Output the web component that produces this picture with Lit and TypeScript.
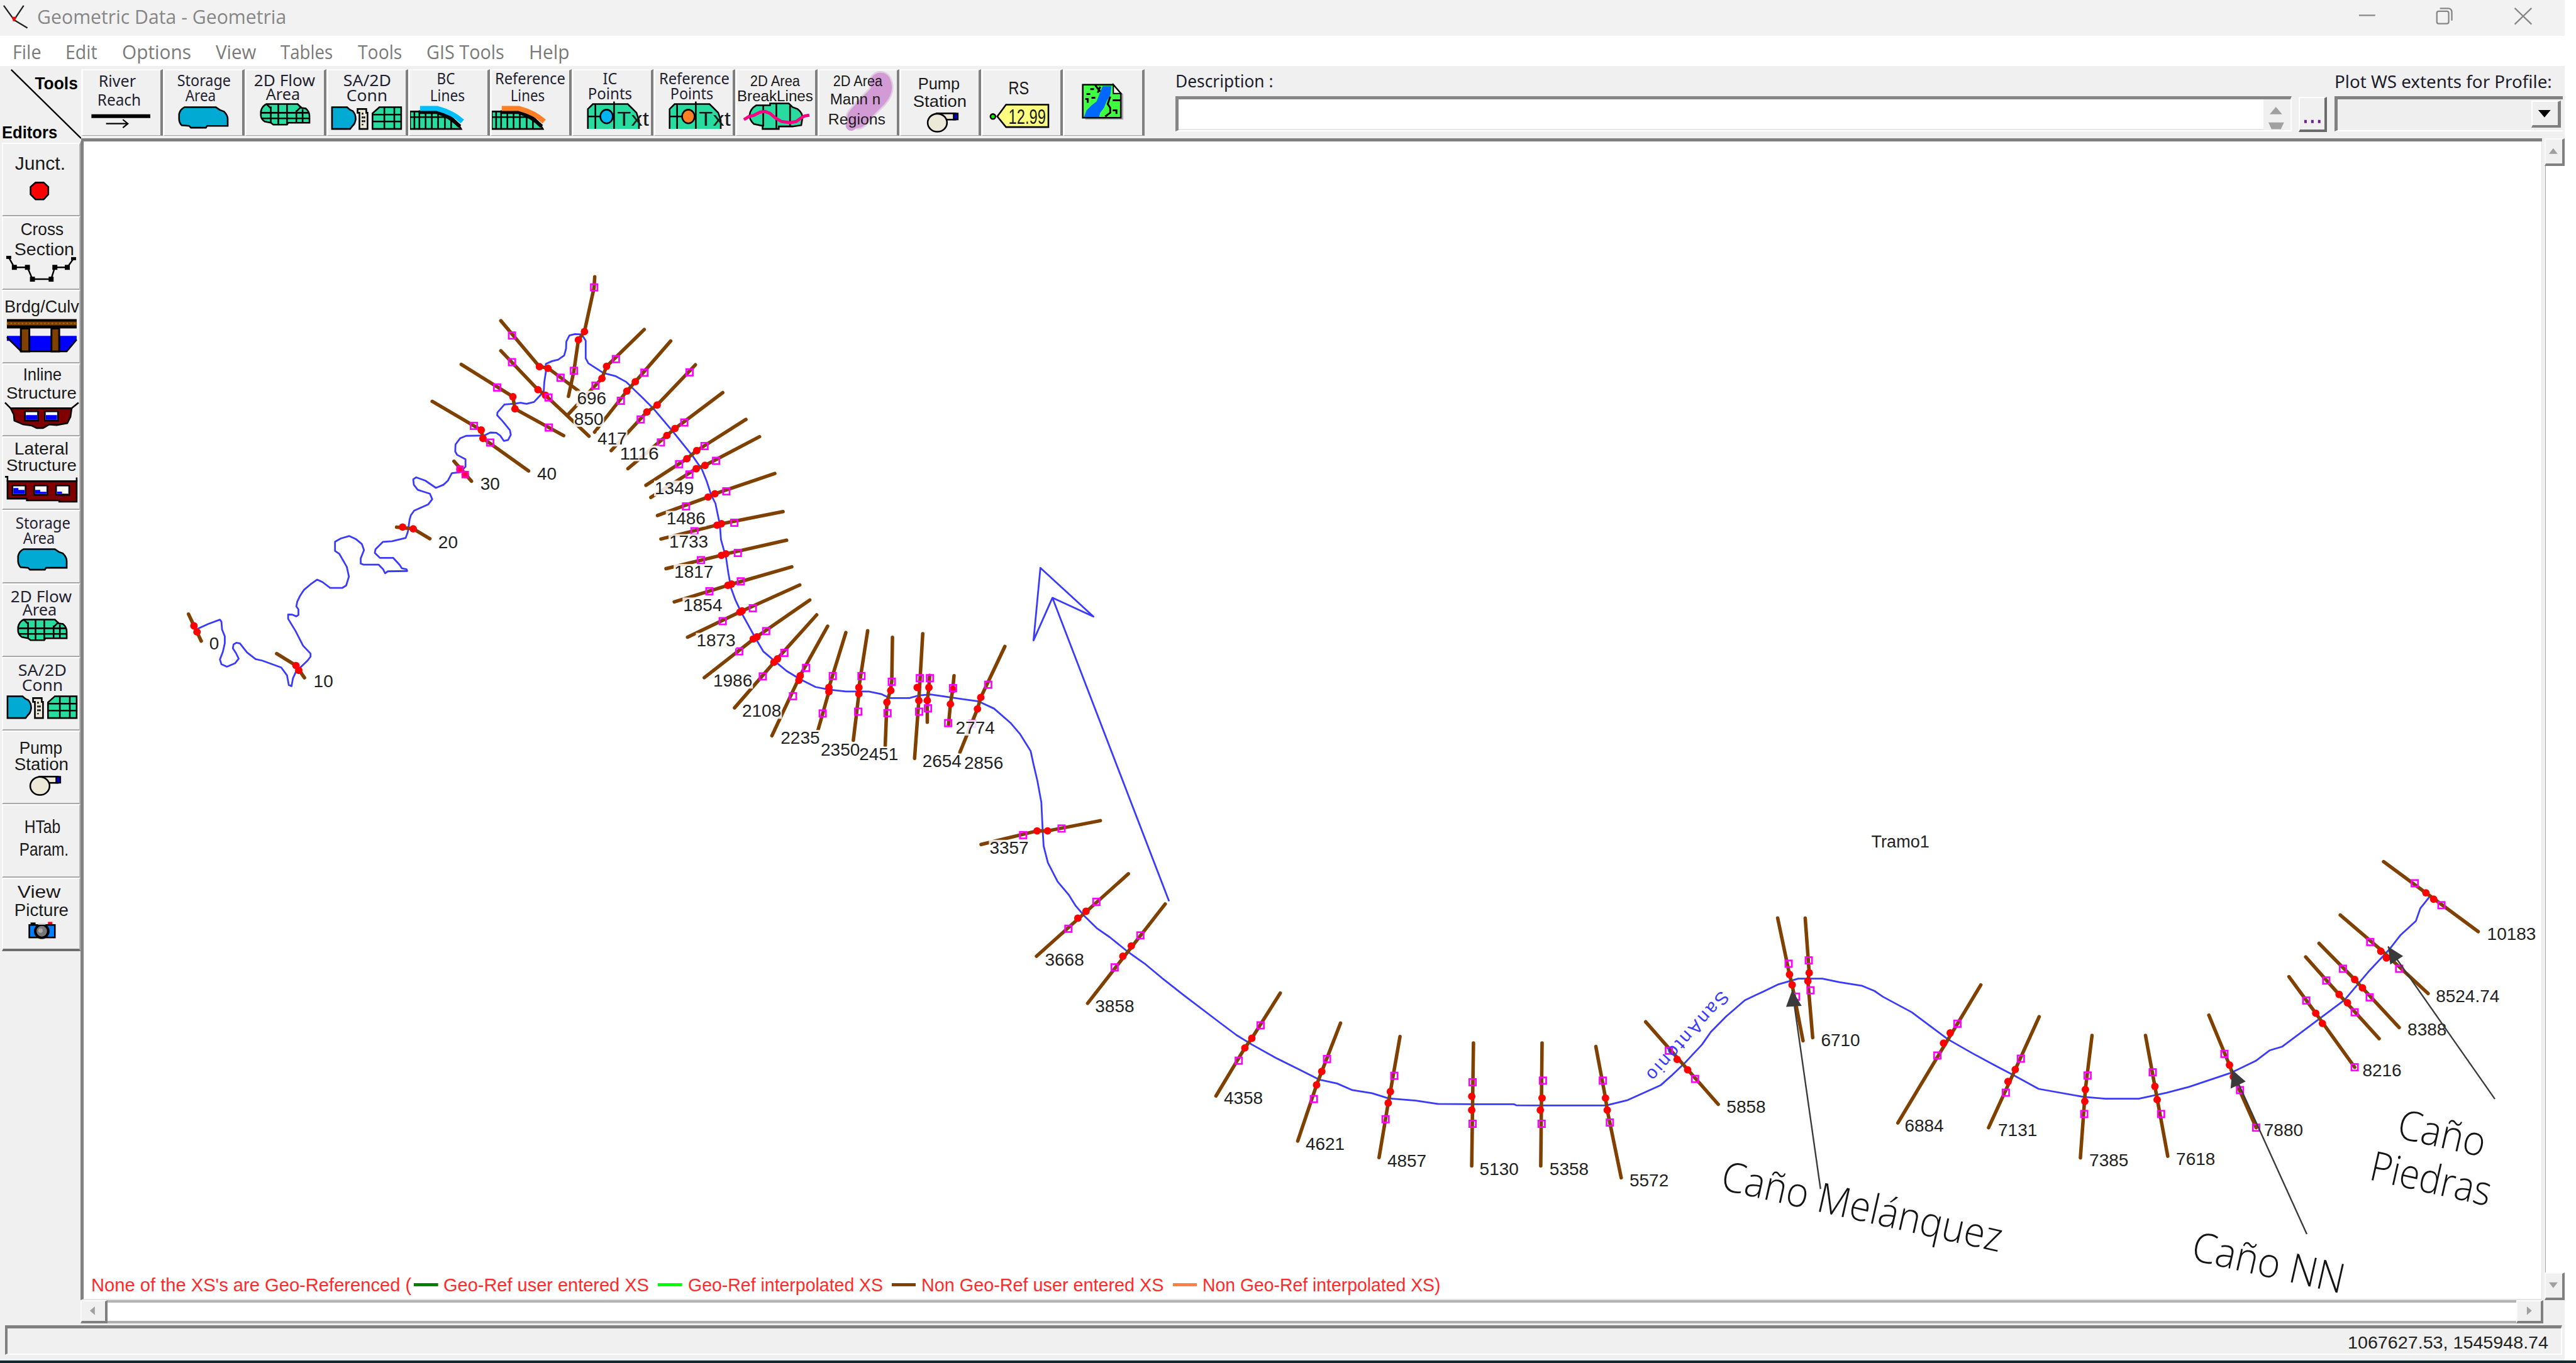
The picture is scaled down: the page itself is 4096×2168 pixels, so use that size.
import { LitElement, html, svg, css } from "lit";
import { customElement } from "lit/decorators.js";

type Pt = [number, number];

interface Sheet { ox: number; oy: number; sx: number; sy: number }
const A: Sheet = { ox: 280, oy: 430, sx: 2.0632, sy: 2.24 };
const B: Sheet = { ox: 780, oy: 430, sx: 2.8, sy: 2.063 };
const C: Sheet = { ox: 1080, oy: 900, sx: 1.9122, sy: 2.063 };
const D: Sheet = { ox: 1900, oy: 1450, sx: 1.4255, sy: 3 };
const E: Sheet = { ox: 2700, oy: 1300, sx: 1.12, sy: 1.96 };

const at = (s: Sheet, [x, y]: Pt): Pt => [
  Math.round((s.ox + x / s.sx) * 10) / 10,
  Math.round((s.oy + y / s.sy) * 10) / 10,
];
const pts = (s: Sheet, list: Pt[]) => list.map((p) => at(s, p).join(",")).join(" ");

interface Section {
  s: Sheet;
  line: Pt[];
  banks: Pt[];
  ineff: Pt[];
  solid?: boolean;
}
const xs = (s: Sheet, line: Pt[], banks: Pt[], ineff: Pt[] = [], solid = false): Section => ({ s, line, banks, ineff, solid });

const SECTIONS: Section[] = [
  xs(A, [[46, 1245], [88, 1342]], [[64, 1287], [74, 1309]]),
  xs(A, [[338, 1387], [402, 1430], [430, 1474]], [[402, 1430], [411, 1447]]),
  xs(A, [[735, 932], [790, 938], [845, 974]], [[755, 932], [790, 938]]),
  xs(A, [[925, 695], [983, 767]], [[945, 724], [962, 743]], [[945, 724], [962, 743]], true),
  xs(A, [[853, 480], [1015, 583], [1021, 613], [1172, 730]], [[1015, 583], [1021, 613]], [[991, 568], [1045, 628]]),
  xs(A, [[949, 347], [1120, 463], [1127, 507], [1288, 603]], [[1120, 463], [1127, 507]], [[1068, 430], [1239, 574]]),
  xs(A, [[1080, 298], [1203, 438], [1228, 458], [1372, 605]], [[1203, 438], [1228, 458]], [[1117, 339], [1238, 466]]),
  xs(A, [[1080, 190], [1208, 355], [1236, 360], [1337, 442]], [[1208, 355], [1236, 361]], [[1117, 243], [1278, 395]]),
  xs(A, [[1391, 32], [1389, 70], [1357, 229], [1337, 259], [1322, 370], [1304, 462]], [[1357, 229], [1337, 259]], [[1389, 70], [1322, 370]]),
  xs(B, [[710, 204], [541, 326], [520, 366], [366, 487]], [[541, 326], [520, 366]], [[583, 302], [491, 390]]),
  xs(B, [[829, 242], [670, 377], [632, 408], [487, 544]], [[670, 377], [632, 408]], [[711, 347], [605, 440]]),
  xs(B, [[940, 321], [768, 454], [722, 477], [562, 605]], [[768, 454], [722, 477]], [[914, 346], [694, 502]]),
  xs(B, [[1063, 413], [848, 532], [812, 555], [637, 665]], [[848, 532], [812, 555]], [[890, 512], [785, 578]]),
  xs(B, [[1167, 502], [946, 605], [902, 632], [718, 720]], [[946, 605], [902, 632]], [[981, 590], [867, 650]]),
  xs(B, [[1228, 559], [983, 654], [944, 665], [740, 760]], [[983, 654], [944, 665]], [[1033, 639], [913, 684]]),
  xs(B, [[1297, 681], [1028, 748], [997, 759], [770, 820]], [[1028, 748], [997, 759]], [[1079, 740], [898, 790]]),
  xs(B, [[1334, 807], [1059, 847], [1035, 852], [785, 898]], [[1057, 847], [1037, 852]], [[1115, 844], [936, 872]]),
  xs(B, [[1350, 902], [1079, 947], [1055, 952], [808, 996]], [[1077, 947], [1057, 952]], [[1131, 944], [965, 968]]),
  xs(B, [[1373, 990], [1105, 1047], [1088, 1051], [845, 1106]], [[1102, 1047], [1086, 1051]], [[1144, 1038], [1003, 1071]]),
  xs(B, [[1409, 1050], [1144, 1138], [905, 1223]], [[1150, 1136], [1140, 1140]], [[1198, 1127], [1063, 1170]]),
  xs(B, [[1454, 1100], [1209, 1225], [980, 1357]], [[1217, 1222], [1200, 1229]], [[1258, 1203], [1137, 1270]]),
  xs(B, [[1485, 1149], [1301, 1300], [1116, 1457]], [[1309, 1295], [1293, 1306]], [[1340, 1275], [1243, 1353]]),
  xs(C, [[474, 217], [390, 380], [303, 580]], [[390, 381], [386, 396]], [[408, 355], [368, 449]]),
  xs(C, [[530, 238], [478, 420], [478, 434], [445, 560]], [[478, 420], [478, 434]], [[490, 382], [459, 506]]),
  xs(C, [[597, 232], [570, 420], [570, 441], [553, 595]], [[570, 420], [570, 441]], [[578, 382], [568, 500]]),
  xs(C, [[673, 254], [671, 400], [667, 430], [656, 468], [651, 612]], [[668, 430], [656, 469]], [[671, 401], [658, 505]]),
  xs(C, [[766, 242], [758, 389], [754, 463], [741, 655]], [[749, 420], [754, 463]], [[757, 389], [755, 500]]),
  xs(C, [[787, 380], [785, 420], [780, 463], [780, 535]], [[785, 420], [780, 463]], [[788, 389], [782, 489]]),
  xs(C, [[862, 381], [858, 427], [851, 475], [845, 545]], [[858, 427], [851, 475]], [[859, 422], [844, 538]]),
  xs(C, [[1018, 284], [944, 453], [934, 491], [880, 635]], [[944, 453], [934, 491]], [[967, 411], [918, 540]]),
  xs(C, [[1311, 861], [1149, 895], [1117, 895], [945, 940]], [[1149, 895], [1117, 895]], [[1192, 887], [1074, 909]]),
  xs(C, [[1397, 1037], [1115, 1310]], [[1267, 1161], [1242, 1184]], [[1299, 1130], [1213, 1219]]),
  xs(C, [[1510, 1137], [1272, 1466]], [[1406, 1276], [1380, 1310]], [[1434, 1241], [1355, 1347]]),
  xs(D, [[220, 433], [155, 650], [139, 697], [73, 928]], [[155, 650], [139, 697]], [[175, 588], [125, 758]]),
  xs(D, [[358, 577], [315, 810], [303, 875], [260, 1145]], [[315, 810], [303, 875]], [[327, 750], [297, 943]]),
  xs(D, [[494, 642], [472, 907], [467, 962], [446, 1225]], [[472, 907], [467, 962]], [[481, 831], [461, 1040]]),
  xs(D, [[662, 673], [658, 1265]], [[658, 930], [658, 996]], [[660, 862], [660, 1062]]),
  xs(D, [[819, 673], [816, 1265]], [[819, 938], [815, 996]], [[821, 854], [818, 1062]]),
  xs(D, [[942, 690], [964, 938], [968, 996], [1000, 1322]], [[964, 938], [968, 996]], [[958, 854], [974, 1056]]),
  xs(D, [[1056, 571], [1222, 968]], [[1128, 752], [1152, 802]], [[1109, 710], [1169, 846]]),
  xs(D, [[1358, 71], [1385, 343], [1391, 393], [1416, 662]], [[1385, 343], [1391, 393]], [[1383, 291], [1400, 450]]),
  xs(D, [[1421, 71], [1430, 335], [1427, 375], [1438, 647]], [[1430, 335], [1427, 375]], [[1429, 275], [1433, 419]]),
  xs(E, [[536, 551], [387, 985]], [[481, 702], [469, 734]], [[494, 673], [458, 773]]),
  xs(E, [[641, 651], [598, 817], [550, 1000]], [[598, 817], [585, 855]], [[608, 783], [581, 890]]),
  xs(E, [[736, 710], [724, 880], [715, 1095]], [[724, 880], [723, 917]], [[728, 836], [722, 957]]),
  xs(E, [[832, 710], [849, 870], [872, 1090]], [[849, 870], [853, 912]], [[845, 826], [860, 957]]),
  xs(E, [[946, 646], [983, 803], [990, 838], [1031, 1000]], [[983, 803], [990, 840]], [[974, 768], [1002, 882], [1031, 1000]]),
  xs(E, [[1090, 525], [1138, 640], [1208, 810]], [[1138, 640], [1150, 672]], [[1121, 600], [1208, 810]]),
  xs(E, [[1120, 463], [1180, 581], [1252, 720]], [[1180, 581], [1195, 607]], [[1157, 537], [1208, 637]]),
  xs(E, [[1144, 420], [1208, 534], [1288, 685]], [[1208, 534], [1222, 560]], [[1187, 500], [1235, 590]]),
  xs(E, [[1182, 331], [1255, 440], [1340, 578]], [[1255, 445], [1265, 466]], [[1236, 416], [1288, 500]]),
  xs(E, [[1260, 163], [1430, 383]], [[1336, 261], [1350, 281]], [[1316, 231], [1364, 300]]),
];

type Station = [Sheet, number, number, string];
const STATIONS: Station[] = [
  [A, 115, 1372, "0"], [A, 460, 1507, "10"], [A, 873, 1008, "20"], [A, 1012, 798, "30"], [A, 1200, 762, "40"],
  [B, 408, 452, "696"], [B, 395, 520, "850"], [B, 500, 585, "417"], [B, 600, 634, "1116"],
  [B, 757, 750, "1349"], [B, 810, 850, "1486"], [B, 822, 927, "1733"], [B, 845, 1026, "1817"],
  [B, 885, 1137, "1854"], [B, 945, 1254, "1873"], [B, 1020, 1387, "1986"], [B, 1150, 1487, "2108"],
  [C, 330, 606, "2235"], [C, 453, 646, "2350"], [C, 571, 661, "2451"], [C, 765, 684, "2654"],
  [C, 893, 690, "2856"], [C, 867, 573, "2774"], [C, 971, 970, "3357"], [C, 1141, 1342, "3668"], [C, 1295, 1496, "3858"],
  [D, 91, 968, "4358"], [D, 278, 1188, "4621"], [D, 465, 1270, "4857"], [D, 676, 1308, "5130"], [D, 836, 1308, "5358"],
  [D, 1019, 1364, "5572"], [D, 1241, 1010, "5858"], [D, 1457, 688, "6710"],
  [E, 399, 1012, "6884"], [E, 567, 1027, "7131"], [E, 731, 1121, "7385"], [E, 887, 1117, "7618"], [E, 1045, 1027, "7880"],
  [E, 1222, 838, "8216"], [E, 1303, 710, "8388"], [E, 1354, 606, "8524.74"], [E, 1446, 410, "10183"],
];

const RIVER: [Sheet, Pt[]][] = [
  [A, [[76, 1298], [110, 1281], [150, 1265], [155, 1272], [157, 1300], [166, 1325], [166, 1350], [160, 1380], [150, 1408], [155, 1425], [173, 1434], [200, 1422], [212, 1405], [203, 1385], [193, 1368], [195, 1354], [204, 1348], [216, 1350], [240, 1383], [268, 1407], [290, 1412], [353, 1437], [372, 1465], [378, 1500], [387, 1504], [392, 1475], [402, 1452], [440, 1412], [450, 1398], [450, 1387], [425, 1358], [400, 1305], [376, 1262], [376, 1246], [390, 1247], [403, 1253], [410, 1248], [410, 1228], [403, 1217], [406, 1200], [415, 1180], [428, 1158], [450, 1138], [472, 1121], [490, 1130], [515, 1151], [555, 1151], [568, 1142], [577, 1110], [570, 1075], [545, 1028], [531, 1018], [531, 985], [550, 973], [578, 964], [600, 975], [620, 993], [627, 1015], [616, 1045], [616, 1063], [625, 1067], [675, 1067], [690, 1083], [697, 1098], [706, 1091], [770, 1090], [768, 1084], [752, 1080], [745, 1068], [724, 1043], [680, 1043], [663, 1025], [665, 1012], [690, 985], [720, 983], [765, 971], [772, 950], [778, 905], [782, 890], [793, 873], [840, 850], [853, 832], [845, 812], [825, 805], [805, 798], [792, 780], [790, 760], [800, 753], [830, 765], [865, 791], [890, 780], [905, 765], [918, 738], [945, 735], [963, 715], [963, 688], [935, 672], [929, 660], [930, 635], [945, 613], [965, 604], [1025, 603], [1045, 592], [1065, 593], [1078, 603], [1090, 622], [1104, 619], [1113, 600], [1110, 583], [1085, 550], [1068, 530], [1069, 520], [1092, 491], [1125, 488], [1145, 485], [1165, 489], [1190, 482], [1205, 465], [1222, 445], [1224, 410], [1229, 375], [1229, 345], [1250, 335], [1270, 330], [1290, 315], [1296, 290], [1297, 265], [1307, 243], [1325, 238], [1348, 239], [1361, 262], [1361, 325], [1370, 343], [1420, 378]]],
  [B, [[580, 358], [630, 378], [670, 407], [700, 428], [750, 465], [840, 543], [930, 625], [970, 668], [990, 705], [1010, 750], [1030, 780], [1050, 850], [1055, 900], [1078, 960], [1088, 1010], [1100, 1060], [1120, 1100], [1144, 1138], [1209, 1225], [1245, 1270], [1301, 1305], [1350, 1335], [1410, 1362], [1480, 1388]]],
  [C, [[478, 427], [530, 433], [600, 433], [640, 442], [665, 455], [725, 455], [755, 446], [790, 443], [860, 454], [938, 466], [985, 490], [1035, 537], [1065, 575], [1097, 630], [1105, 670], [1118, 730], [1130, 800], [1134, 890], [1137, 945], [1150, 1000], [1180, 1063], [1215, 1108], [1235, 1143], [1265, 1180], [1300, 1217], [1340, 1247], [1395, 1295], [1450, 1337], [1500, 1382], [1568, 1440]]],
  [D, [[85, 580], [120, 635], [155, 680], [210, 745], [260, 797], [310, 850], [350, 868], [385, 900], [430, 915], [468, 940], [530, 950], [580, 966], [660, 968], [755, 968], [760, 973], [820, 974], [965, 974], [1015, 948], [1090, 877], [1115, 830], [1145, 770], [1185, 680], [1205, 620], [1240, 545], [1283, 467], [1325, 425], [1360, 390], [1405, 363], [1460, 363], [1500, 380], [1550, 397]]],
  [E, [[345, 570], [360, 588], [412, 637], [477, 722], [520, 765], [560, 803], [595, 835], [640, 878], [720, 903], [760, 909], [820, 909], [870, 890], [910, 872], [985, 828], [1030, 790], [1055, 757], [1078, 745], [1135, 670], [1190, 598], [1235, 505], [1270, 440], [1290, 395], [1318, 350], [1326, 310], [1342, 275]]],
];

/** Text fitted between two x positions. */
const t = (x0: number, x1: number, y: number, text: string, size = 25, cls = "lbl") =>
  svg`<text class=${cls} x=${x0} y=${y} font-size=${size} textLength=${x1 - x0} lengthAdjust="spacingAndGlyphs">${text}</text>`;

/** Stand-alone fitted label for bars and panels. */
const fit = (text: string, w: number, h: number, base: number, size: number, cls: string) =>
  html`<svg class="fit" width=${w} height=${h} viewBox="0 0 ${w} ${h}">${t(0, w, base, text, size, cls)}</svg>`;

const blob = (dy = 0) => svg`<path transform="translate(0 ${dy})" class="ink blue" d="M35 61 L85 61 Q91 66 98 68 Q104 74 104 80 L104 91 L71 91 L69 94 L45 94 L42 91 L30 90 Q26 86 26 80 L26 72 Q28 64 35 61Z"/>`;
const mesh = (dy = 0) => svg`<g transform="translate(0 ${dy})">
  <path class="ink green" d="M35 56 L85 56 Q88 59 91 62 L98 63 Q104 68 104 75 L104 86 L70 86 L68 89 L46 89 L42 86 L32 84 Q26 80 26 74 L26 68 Q28 59 35 56Z"/>
  <path class="ink" fill="none" d="M27 70 H104 M28 79 H104 M42 60 V86 M54 56 V89 M68 56 V89 M83 66 V86 M93 64 V86 M35 56 L42 63 M83 68 L91 60"/></g>`;
const conn = (dy = 0) => svg`<g transform="translate(0 ${dy})">
  <path class="ink blue" d="M9 61 H33 Q38 66 42 67 Q47 72 47 80 Q46 88 42 91 L38 96 H9Z"/>
  <path class="ink" fill="#ece9d8" d="M50 64 H64 V70 H66 V96 H53 V70 H50Z"/>
  <path d="M58 70 V90 M61 76 V86" stroke="#000" stroke-width="2.5" stroke-dasharray="3 3"/>
  <path class="ink green" d="M85 61 H120 V96 H74 V71Z"/>
  <path class="ink" fill="none" d="M74 73 H120 M74 84 H120 M93 61 V96 M109 61 V96"/></g>`;
const lines = (c: string) => svg`
  <path class="ink green" d="M3 68 H46 Q72 72 85 96 H3Z"/>
  <path class="ink" fill="none" d="M3 77 H72 M10 68 V96 M18 68 V96 M28 68 V96 M38 68 V96 M48 70 V96 M59 76 V96 M69 80 V96"/>
  <path d="M17 69 L46 69 Q68 76 83 92" fill="none" stroke="#000" stroke-width="6"/>
  <path d="M19 63 L46 63 Q72 70 87 84" fill="none" stroke=${c} stroke-width="8"/>`;
const points = (c: string) => svg`
  <path class="green" d="M26 96 V64 L34 56 H90 L96 62 L104 70 L108 82 V96Z"/>
  <path class="ink" fill="none" d="M26 96 V64 L34 56 H90 L96 62 L104 70 L108 82 V96 M38 56 V96 M68 52 V96 M26 76 H46"/>
  <ellipse class="ink" fill=${c} cx="56" cy="76" rx="10" ry="11"/>
  ${t(73, 124, 91, "Txt", 31, "thin")}`;
const pump = (dy = 0) => svg`<g transform="translate(0 ${dy})">
  <rect class="ink" fill="#ece9d8" x="60" y="71" width="30" height="10"/>
  <rect x="87" y="71" width="7" height="10" fill="#0000b0" stroke="#000" stroke-width="2"/>
  <ellipse class="ink" fill="#ece9d8" cx="61" cy="86" rx="15.5" ry="14.5"/></g>`;

const TOOLS = [
  svg`${t(28, 88, 28, "River")}${t(26, 96, 59, "Reach")}
    <path d="M16.5 75.5 H111" stroke="#000" stroke-width="6"/><path d="M40 87.5 H75 M67 81 L75 87.5 L67 94" fill="none" stroke="#000" stroke-width="2.2"/>`,
  svg`${t(23, 109, 27, "Storage")}${t(36, 85, 51, "Area")}${blob()}`,
  svg`${t(15, 113, 27, "2D Flow")}${t(34, 89, 49, "Area")}${mesh()}`,
  svg`${t(27, 104, 27, "SA/2D")}${t(32, 98, 51, "Conn")}${conn()}`,
  svg`${t(46, 75, 24, "BC")}${t(35, 91, 51, "Lines")}${lines("#00bfff")}`,
  svg`${t(8, 121, 24, "Reference")}${t(33, 88, 51, "Lines")}${lines("#ff7f27")}`,
  svg`${t(50, 73, 24, "IC")}${t(26, 97, 48, "Points")}${points("#00b4f5")}`,
  svg`${t(9, 122, 24, "Reference")}${t(27, 96, 48, "Points")}${points("#ff7f27")}`,
  svg`${t(24, 104, 27, "2D Area", 24, "pix")}${t(3, 125, 51, "BreakLines", 24, "pix")}
    <path class="ink green" d="M34 58 H56 V55 H86 L92 61 L100 64 Q108 70 108 78 L106 90 L92 92 H70 V96 H44 V91 L30 88 Q23 82 23 74 Q24 64 34 58Z"/>
    <path class="ink" fill="none" d="M45 58 V92 M66 55 V96 M88 58 V92"/>
    <path d="M14 81 L22 76 L30 74 L40 69 L48 68 L56 71 L64 78 L74 84 L88 86 L98 84 L106 78 L112 75 L119 74" fill="none" stroke="#ff0080" stroke-width="5"/>`,
  svg`<path d="M101 22 Q106 32 96 44 L78 62 L64 78" fill="none" stroke="#ded0de" stroke-width="38" stroke-linecap="round" stroke-linejoin="round"/>
    <path d="M101 22 Q106 32 96 44 L78 62 L64 78" fill="none" stroke="#d29bd6" stroke-width="33" stroke-linecap="round" stroke-linejoin="round"/><path d="M62 78 L54 90" stroke="#d29bd6" stroke-width="18" stroke-linecap="round"/>
    ${t(25, 104, 27, "2D Area", 24, "pix")}${t(20, 101, 57, "Mann n", 24, "pix")}${t(17, 109, 89, "Regions", 24, "pix")}`,
  svg`${t(30, 97, 32, "Pump", 26, "pix")}${t(22, 108, 61, "Station", 26, "pix")}${pump()}`,
  svg`${t(44, 77, 40, "RS", 30, "pix")}
    <path class="ink" fill="#ffff80" d="M40 57 H108 V93 H40 L26 76Z"/><ellipse class="ink" fill="#00ff00" cx="19" cy="76" rx="4" ry="4"/>
    ${t(44, 104, 88, "12.99", 34, "pix")}`,
  svg`<path d="M36 30 H84 L97 40 V81 H36Z" fill="#aaa"/><path d="M32 25 H81 L93 39 V78 H32Z" fill="#40ff40" stroke="#000" stroke-width="2.6"/>
    <path d="M64 27 H78 L76 42 L70 52 L66 62 L60 70 L58 77 H34 L38 66 L46 58 L54 52 L58 42Z" fill="#0068ff"/>
    <path d="M81 25 V39 H93Z" fill="#f4f4f4" stroke="#000" stroke-width="2"/>
    <path d="M52 26 L60 36 M60 28 L56 38 M38 40 H44 M46 46 H52 M36 48 H40 V54 M76 44 L72 56 L76 62 V70 L68 76 M80 50 H92 M80 66 H86 V72 M44 32 H50" fill="none" stroke="#000" stroke-width="3"/>`,
];

const deck = (y: number) => svg`<path d="M11 ${y} L20 ${y + 16} H41 L49 ${y + 35} H79 L85 ${y + 16} H105 L115 ${y + 2}" fill="none" stroke="#000" stroke-width="2.5"/>
  ${[[11, y], [20, y + 16], [41, y + 16], [49, y + 35], [79, y + 35], [85, y + 16], [105, y + 16], [115, y + 2]].map(([x, v], i) =>
    svg`<rect x=${x - 4} y=${v - (i % 7 ? 4 : 2.5)} width="8" height=${i % 7 ? 8 : 5}/>`)}`;
const gate = (x: number, y: number, lateral = false) => svg`<rect class="ink" fill="#fff" x=${x} y=${y} width="21" height="15"/>
  ${lateral
    ? svg`<path fill="#00f" d="M${x + 1.5} ${y + 4 + (x - 16) / 12} h8 v3 h10 V${y + 13.7} h-18Z"/>`
    : svg`<rect x=${x + 1.5} y=${y + 6} width="18" height="7.7" fill="#00f"/>`}`;

const EDITORS = [
  svg`${t(21, 102, 43, "Junct.", 29, "wide")}<path fill="#f00" class="ink" d="M54 64 H67 L74.5 71 V83 L67 91 H54 L46 83 V71Z"/>`,
  svg`${t(30, 99, 30, "Cross", 27, "wide")}${t(20, 116, 63, "Section", 27, "wide")}${deck(66)}`,
  svg`${t(4, 124, 36, "Brdg/Culv", 27, "wide")}
    <path fill="#00f" d="M8 74 H120 V80 L104 99 H31 L12 82 H8Z"/><path fill="none" stroke="#000" stroke-width="2.5" d="M8 76 L31 99 H104 L120 80"/>
    <path fill="#804000" stroke="#000" stroke-width="3" d="M30.5 62 H44 V99 H30.5Z M79.5 62 H92 V99 H79.5Z"/>
    <rect x="8" y="47" width="112" height="15"/><path d="M8 54 H120" stroke="#804000" stroke-width="6"/><path d="M8 54 H120" stroke="#a08000" stroke-width="2" stroke-dasharray="2 4"/>`,
  svg`${t(34, 96, 27, "Inline", 27, "wide")}${t(7, 120, 57, "Structure", 26, "wide")}
    <path class="ink" fill="#800000" d="M14 72 H112 L110 86 L105 96 L88 99 L76 98 L66 104 H56 L48 100 L34 98 L20 92 L19 82Z"/>
    <path class="ink" fill="none" d="M5 63 L14 72 M112 72 L123 63"/>${gate(37, 77)}${gate(69, 77)}`,
  svg`${t(20, 107, 28, "Lateral", 27, "wide")}${t(7, 120, 55, "Structure", 26, "wide")}
    <path class="ink" fill="#800000" d="M9 71 H120 V104 H92 V102 H40 V99 H9Z"/>
    <path class="ink" fill="none" d="M5 64 H9 V72 M120 65 V72"/>${gate(17, 78, true)}${gate(52, 78, true)}${gate(87, 78, true)}`,
  svg`${t(22, 110, 30, "Storage")}${t(34, 85, 54, "Area")}${blob(2)}`,
  svg`${t(14, 112, 30, "2D Flow")}${t(33, 88, 51, "Area")}${mesh(2)}`,
  svg`${t(26, 104, 30, "SA/2D")}${t(32, 98, 54, "Conn")}${conn(2)}`,
  svg`${t(28, 97, 37, "Pump", 27, "wide")}${t(20, 107, 64, "Station", 27, "wide")}${pump(3)}`,
  svg`${t(36, 94, 46, "HTab", 29, "wide")}${t(28, 107, 83, "Param.", 29, "wide")}`,
  svg`${t(25, 94, 32, "View", 27, "wide")}${t(20, 107, 62, "Picture", 27, "wide")}
    <rect class="ink" x="44" y="76" width="41" height="20" fill="#0080ff"/><rect x="46" y="72" width="8" height="3"/><rect x="74" y="71" width="7" height="4" fill="#f00"/>
    <circle cx="64" cy="86" r="10.5" fill="#777" stroke="#000" stroke-width="4"/><path d="M58 74 H70" stroke="#ddd" stroke-width="3"/><circle cx="62" cy="85" r="3.5" fill="#aaa"/>`,
];

const MENU: [string, number][] = [["File", 46], ["Edit", 51], ["Options", 111], ["View", 65], ["Tables", 84], ["Tools", 71], ["GIS Tools", 125], ["Help", 65]];

const LEGEND: { text: string; w: number; dash?: string }[] = [
  { text: "None of the XS's are Geo-Referenced (", w: 514 },
  { dash: "#008000", text: "Geo-Ref user entered XS", w: 330 },
  { dash: "#00ff00", text: "Geo-Ref interpolated XS", w: 313 },
  { dash: "#804000", text: "Non Geo-Ref user entered XS", w: 389 },
  { dash: "#ff8040", text: "Non Geo-Ref interpolated XS)", w: 382 },
];

@customElement("app-root")
export class AppRoot extends LitElement {
  static styles = css`
    :host { display: block; width: 4096px; height: 2168px; overflow: hidden; background: #fff; }
    * { box-sizing: border-box; }
    svg { display: block; }
    .fit { overflow: visible; }
    .app { width: 4134px; height: 2188.2px; zoom: 0.990808; display: flex; flex-direction: column; background: #fff; }
    .window { width: 4116px; flex: 1; min-height: 0; display: flex; flex-direction: column; background: #f0f0f0; }
    .desk { height: 4.4px; background: #0f2a30; flex: none; }
    .title { height: 58px; background: #f2f2f2; display: flex; align-items: flex-start; flex: none; }
    .logo { margin-right: 10px; }
    .spring { flex: 1; }
    .menu { height: 48px; background: #fff; display: flex; gap: 39.4px; padding-left: 20px; flex: none; }
    .body { flex: 1; min-height: 0; display: flex; flex-direction: column; }
    .top { height: 121px; display: flex; flex: none; }
    .corner { width: 130px; flex: none; }
    .right { flex: 1; display: flex; flex-direction: column; }
    .tools { flex: 1; display: flex; align-items: stretch; padding-top: 5px; }
    .tool { width: 131.3px; height: 107px; border-left: 3.1px solid #fcfcfc; border-top: 2.1px solid #fcfcfc; border-right: 4.1px solid #808080; border-bottom: 1px solid #a0a0a0; overflow: hidden; flex: none; }
    .tool svg { margin: -2px 0 0 -3px; }
    .band { height: 5.1px; background: #808080; margin-right: 37px; flex: none; }
    .desc { margin-left: 50px; width: 1791px; flex: none; }
    .field { height: 57px; margin-top: -3px; background: #fff; border-top: 5.1px solid #868686; border-left: 5.1px solid #868686; border-bottom: 3px solid #fff; border-right: 3px solid #fff; display: flex; justify-content: flex-end; box-shadow: inset 0 -2px 0 #e6e6e6; }
    .spin { width: 43px; background: #f0f0f0; }
    .dots { margin: 44px 0 0 11px; width: 46px; height: 57px; border-left: 3px solid #fff; border-top: 3px solid #fff; border-right: 4.1px solid #6c6c6c; border-bottom: 4.1px solid #6c6c6c; flex: none; }
    .prof { margin-left: 12px; width: 366px; flex: none; }
    .combo { height: 57px; margin-top: -3px; background: #efefef; border-top: 5.1px solid #808080; border-left: 5.1px solid #808080; border-bottom: 3px solid #fff; display: flex; justify-content: flex-end; padding: 2px 3px 4px 0; }
    .drop { width: 47px; border-left: 3px solid #fff; border-top: 3px solid #fff; border-right: 5.1px solid #808080; border-bottom: 4.1px solid #808080; }
    .main { flex: 1; display: flex; min-height: 0; }
    .side { width: 129px; flex: none; padding: 2px 0 0 3px; }
    .ed { height: 118px; border-top: 2.1px solid #fdfdfd; border-left: 2.1px solid #fbfbfb; border-bottom: 2.1px solid #a8a8a8; border-right: 2.1px solid #b8b8b8; overflow: hidden; }
    .ed:last-child { border-bottom: 4.1px solid #6e6e6e; }
    .ed svg { margin: -2px 0 0 -2px; }
    .work { flex: 1; display: flex; flex-direction: column; }
    .view { flex: 1; display: flex; min-height: 0; }
    .canvas { width: 3951px; background: #fff; border-left: 5.1px solid #808080; border-bottom: 3px solid #e4e4e4; border-right: 2px solid #e4e4e4; position: relative; flex: none; }
    .map { position: absolute; left: 0; top: 0; }
    .legend { position: absolute; left: 12px; bottom: -2px; display: flex; height: 40px; }
    .key { display: flex; }
    .dash { width: 39px; height: 5px; margin: 13px 9px 0 14px; }
    .key:nth-child(2) .dash { margin-left: 4px; }
    .vbar { margin: -5px 0 0 5px; width: 31px; display: flex; flex-direction: column; background: #fff; border-left: 2px solid #a8a8a8; }
    .hbar { height: 38px; width: 3953px; display: flex; background: #fff; border-top: 4.1px solid #b4b4b4; border-bottom: 4.1px solid #b0b0b0; flex: none; }
    .sb { background: #f0f0f0; flex: none; border-right: 4.1px solid #808080; border-bottom: 4.1px solid #808080; border-left: 3px solid #fafafa; border-top: 3px solid #fafafa; }
    .vb { height: 44px; margin-left: -2px; }
    .hb { width: 44px; height: 38px; margin-top: -4px; }
    .status { height: 47px; margin: 3px 4px 9px 8px; border-top: 5.1px solid #808080; border-left: 4.1px solid #808080; border-bottom: 3px solid #fff; border-right: 3px solid #fff; display: flex; justify-content: flex-end; padding-right: 20px; flex: none; }
    .ttl, .mnu, .cap { font-family: "Open Sans", "Noto Sans", sans-serif; }
    .ttl { fill: #868686; }
    .mnu { fill: #7a7a7a; }
    .ui { fill: #1c1c2c; font-family: "Noto Sans", sans-serif; }
    .lbl { fill: #222230; font-family: "Noto Sans", sans-serif; }
    .pix, .wide, .thin { fill: #1a1a1a; font-family: "Liberation Sans", Arial, sans-serif; }
    .bold { fill: #000; font-family: "Liberation Sans", Arial, sans-serif; font-weight: 700; }
    .red { fill: #ff2a2a; font-family: "Liberation Sans", Arial, sans-serif; }
    .st { fill: #222; font-family: "Liberation Sans", Arial, sans-serif; font-size: 28.6px; }
    .cap { fill: #141414; font-weight: 300; }
    .ink { stroke: #000; stroke-width: 2.6; }
    .blue { fill: #00aad2; }
    .green { fill: #28dca0; }
    .river { fill: none; stroke: #3a3aff; stroke-width: 2.8; stroke-linejoin: round; }
    .xs { fill: none; stroke: #804000; stroke-width: 5.6; stroke-linecap: round; stroke-linejoin: round; }
    .bank { fill: #f00; }
    .ineff { fill: none; stroke: #f0f; stroke-width: 2.7; }
    .ineff.solid { fill: #f04; stroke: #ff00c0; }
    .note { stroke: #3a3a3a; stroke-width: 2.4; }
    .head { fill: #3a3a3a; }
    .reach { fill: #3a3aff; font-family: "Liberation Sans", Arial, sans-serif; }
  `;

  private section(x: Section) {
    const r = x.solid ? 4.6 : 5.2;
    return svg`<polyline class="xs" points=${pts(x.s, x.line)} />
      ${x.banks.map((p) => { const [a, b] = at(x.s, p); return svg`<circle class="bank" cx=${a} cy=${b} r="6" />`; })}
      ${x.ineff.map((p) => { const [a, b] = at(x.s, p); return svg`<rect class="ineff ${x.solid ? "solid" : ""}" x=${a - r} y=${b - r} width=${r * 2} height=${r * 2} />`; })}`;
  }

  private labelWidth(text: string) {
    return (text.length - (text.includes(".") ? 0.5 : 0)) * 15.7;
  }

  private plate([s, x, y, text]: Station) {
    const [a, b] = at(s, [x, y]);
    return svg`<rect x=${a - 1} y=${b - 22} width=${this.labelWidth(text) + 2} height="25" fill="#fff" opacity=".85" />`;
  }

  private station([s, x, y, text]: Station) {
    const [a, b] = at(s, [x, y]);
    return svg`<text class="st" x=${a} y=${b} textLength=${this.labelWidth(text)} lengthAdjust="spacingAndGlyphs">${text}</text>`;
  }

  private map() {
    const river = RIVER.map(([s, l]) => pts(s, l)).join(" ");
    return html`<svg class="map" width="3944" height="1858" viewBox="134 227 3944 1858">
      <polyline class="river" points=${river} />
      <polyline class="river" points=${pts(C, [[1164, 123], [1290, 185], [1127, 24], [1106, 264], [1164, 123], [1522, 1128]])} />
      ${SECTIONS.map((x) => this.section(x))}
      ${STATIONS.map((x) => this.plate(x))}
      ${STATIONS.map((x) => this.station(x))}
      <text class="reach" font-size="29" transform="translate(2762 1589) rotate(132)" textLength="182" lengthAdjust="spacing">SanAntonio</text>
      ${t(3003, 3096, 1360, "Tramo1", 28, "st")}
      ${[
        [[197, 567], [186, 620], [214, 617], [248, 1193]],
        [[988, 818], [985, 877], [1012, 855], [1122, 1335]],
        [[1268, 430], [1272, 487], [1295, 460], [1460, 910]],
      ].map((a) => {
        const [tip, l, r, end] = (a as Pt[]).map((p) => at(E, p));
        return svg`<path class="note" d="M${tip} L${end}" /><polygon class="head" points="${tip} ${l} ${r}" />`;
      })}
      <g transform="translate(2759 1909) rotate(12.7)">${t(0, 460, 0, "Caño Melánquez", 66, "cap")}</g>
      <g transform="translate(3514 2022) rotate(12.7)">${t(0, 249, 0, "Caño NN", 66, "cap")}</g>
      <g transform="translate(3844 1826) rotate(12.7)">${t(0, 143, 0, "Caño", 66, "cap")}</g>
      <g transform="translate(3800 1893) rotate(12.7)">${t(0, 197, 0, "Piedras", 66, "cap")}</g>
    </svg>`;
  }

  render() {
    return html`<div class="app">
      <div class="window">
        <div class="title">
          <svg class="logo" width="50" height="58"><path d="M6 9 L22.6 32 L38 9 M22.6 32 L44 45" fill="none" stroke="#222" stroke-width="2.4"/><path d="M19 27 H26 L24 34 H21Z" fill="#f00"/></svg>
          ${fit("Geometric Data - Geometria", 400, 58, 38.3, 31, "ttl")}
          <div class="spring"></div>
          <svg width="340" height="58" viewBox="3776 0 340 58"><g fill="none" stroke="#868686" stroke-width="2.3">
            <path d="M3786 24.7 H3812 M4036 13 L4063 39 M4063 13 L4036 39"/>
            <rect x="3911" y="18" width="19" height="20" rx="3"/><path d="M3916 13.5 H3929 Q3935 13.5 3935 20 V33"/></g></svg>
        </div>
        <div class="menu">${MENU.map(([m, w]) => fit(m, w, 48, 37.7, 31, "mnu"))}</div>
        <div class="body">
          <div class="top">
            <svg class="corner" width="130" height="121" viewBox="0 106 130 121"><path d="M18 112 L130 222" stroke="#000" stroke-width="2.4"/>
              ${t(56, 125, 143, "Tools", 28, "bold")}${t(3, 92, 222.5, "Editors", 28, "bold")}</svg>
            <div class="right">
              <div class="tools">
                ${TOOLS.map((b) => html`<div class="tool"><svg width="131" height="107">${b}</svg></div>`)}
                <div class="desc">${fit("Description :", 157, 46, 29.7, 28, "ui")}
                  <div class="field"><div class="spin"><svg width="43" height="50"><path d="M20 12 L30 24 H10Z M8 37 H33 L28 48 H13Z" fill="#a0a0a0"/></svg></div></div></div>
                <div class="dots"><svg width="40" height="50"><path d="M7 35 h4 v5 h-4z M18 35 h4 v5 h-4z M29 35 h4 v5 h-4z" fill="#6a2090"/></svg></div>
                <div class="prof">${fit("Plot WS extents for Profile:", 349, 46, 30, 28, "ui")}
                  <div class="combo"><div class="drop"><svg width="38" height="38"><path d="M9 13 H29 L19 25Z"/></svg></div></div></div>
              </div>
              <div class="band"></div>
            </div>
          </div>
          <div class="main">
            <div class="side">${EDITORS.map((b) => html`<div class="ed"><svg width="128" height="118">${b}</svg></div>`)}</div>
            <div class="work">
              <div class="view">
                <div class="canvas">${this.map()}
                  <div class="legend">${LEGEND.map((k) => html`<div class="key">${k.dash ? html`<svg class="dash"><rect width="39" height="5" fill=${k.dash} /></svg>` : ""}${fit(k.text, k.w, 40, 26, 29, "red")}</div>`)}</div>
                </div>
                <div class="vbar">
                  <div class="sb vb"><svg width="24" height="36"><path d="M12 14 L19 23 H5Z" fill="#a0a0a0"/></svg></div>
                  <div class="spring"></div>
                  <div class="sb vb"><svg width="24" height="36"><path d="M12 23 L19 14 H5Z" fill="#a0a0a0"/></svg></div>
                </div>
              </div>
              <div class="hbar">
                <div class="sb hb"><svg width="36" height="30"><path d="M13 15 L21 8 V22Z" fill="#a0a0a0"/></svg></div>
                <div class="spring"></div>
                <div class="sb hb"><svg width="36" height="30"><path d="M23 15 L15 8 V22Z" fill="#a0a0a0"/></svg></div>
              </div>
            </div>
          </div>
          <div class="status">${fit("1067627.53, 1545948.74", 322, 40, 32, 28, "st")}</div>
        </div>
      </div>
      <div class="desk"></div>
    </div>`;
  }
}
